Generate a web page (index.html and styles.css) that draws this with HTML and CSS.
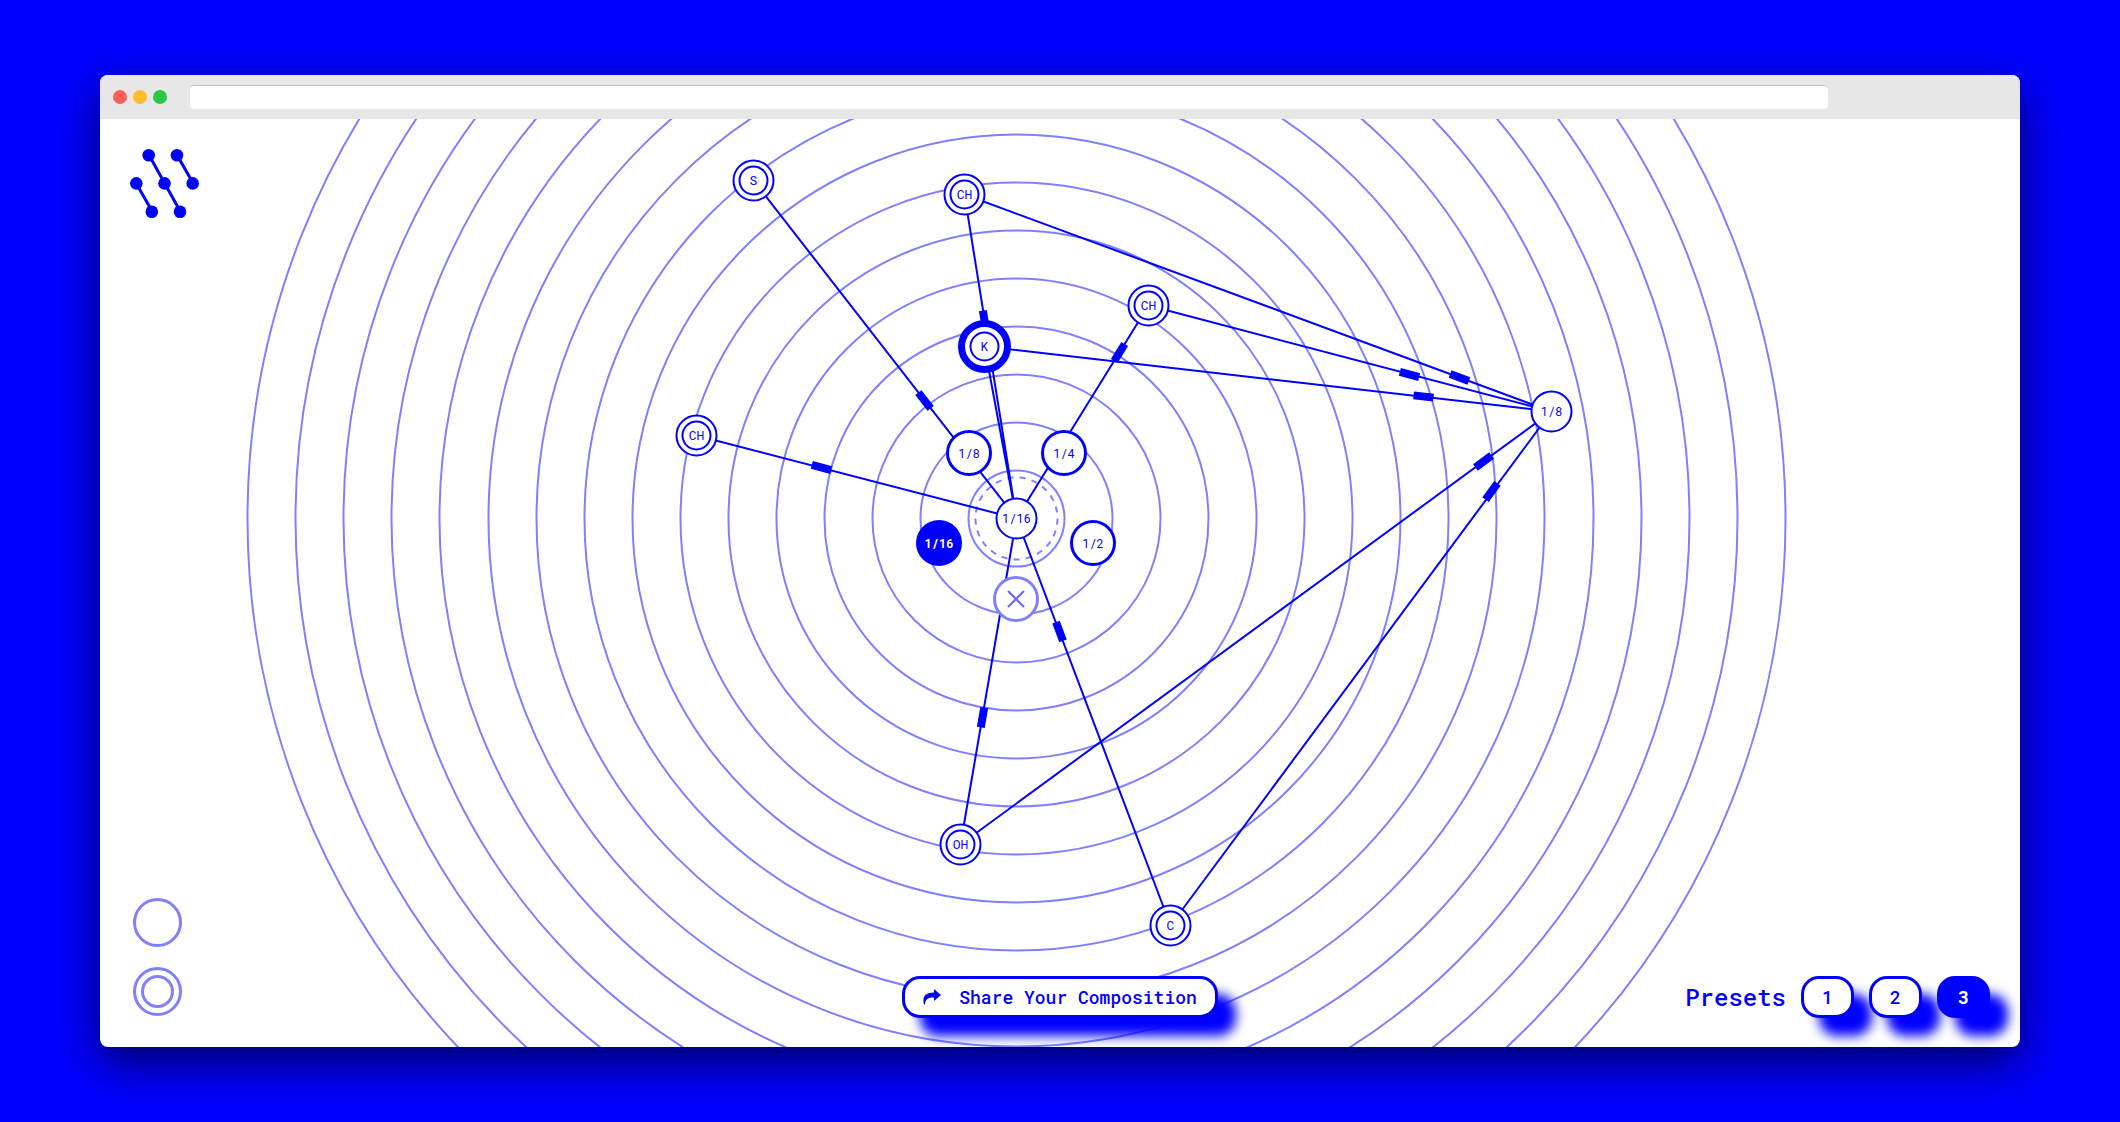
FILE: index.html
```
<!DOCTYPE html>
<html lang="en">
<head>
<meta charset="utf-8">
<meta name="viewport" content="width=device-width, initial-scale=1">
<title>Composition</title>
<link rel="stylesheet" href="styles.css">
</head>
<body>
<div class="window">
  <header class="titlebar">
    <div class="lights">
      <span class="light light-close"></span>
      <span class="light light-min"></span>
      <span class="light light-max"></span>
    </div>
    <input class="address" type="text" aria-label="Address">
  </header>

  <main class="stage">
    <div class="graph">
      <svg class="graph-lines" width="1" height="1" viewBox="-0.5 -0.5 1 1" role="img" aria-label="Sequencer graph">
        <g class="rings">
          <circle r="48"/><circle r="96"/><circle r="144"/><circle r="192"/>
          <circle r="240"/><circle r="288"/><circle r="336"/><circle r="384"/>
          <circle r="432"/><circle r="480"/><circle r="528"/><circle r="577"/>
          <circle r="625"/><circle r="673"/><circle r="721"/><circle r="769"/>
          <circle class="dashed" r="41" pathLength="252"/>
        </g>
        <g class="links">
          <path d="M0 0L-263 -338M0 0L-52 -324M0 0L132 -213M0 0L-32 -172M0 0L-320 -83M0 0L-56 326M0 0L154 407"/>
          <path d="M535 -107L-52 -324M535 -107L132 -213M535 -107L-32 -172M535 -107L-56 326M535 -107L154 407"/>
        </g>
        <g class="pulses">
          <rect x="-10" y="-4" width="20" height="8" transform="translate(-92 -118) rotate(52.1)"/>
          <rect x="-10" y="-4" width="20" height="8" transform="translate(-32 -198) rotate(80.8)"/>
          <rect x="-10" y="-4" width="20" height="8" transform="translate(103 -166) rotate(-58.3)"/>
          <rect x="-10" y="-4" width="20" height="8" transform="translate(-195 -51) rotate(14.5)"/>
          <rect x="-10" y="-4" width="20" height="8" transform="translate(-34 199) rotate(99.8)"/>
          <rect x="-10" y="-4" width="20" height="8" transform="translate(43 113) rotate(69.3)"/>
          <rect x="-10" y="-4" width="20" height="8" transform="translate(443 -141) rotate(20.2)"/>
          <rect x="-10" y="-4" width="20" height="8" transform="translate(393 -144) rotate(14.6)"/>
          <rect x="-10" y="-4" width="20" height="8" transform="translate(407 -122) rotate(6.5)"/>
          <rect x="-10" y="-4" width="20" height="8" transform="translate(467 -57) rotate(-36.2)"/>
          <rect x="-10" y="-4" width="20" height="8" transform="translate(475 -27) rotate(-53.5)"/>
        </g>
        <g class="nodes">
          <g transform="translate(-263 -338)"><circle r="20"/><circle r="14"/><text y="4">S</text></g>
          <g transform="translate(-52 -324)"><circle r="20"/><circle r="14"/><text y="4">CH</text></g>
          <g transform="translate(132 -213)"><circle r="20"/><circle r="14"/><text y="4">CH</text></g>
          <g transform="translate(-32 -172)"><circle class="active" r="23"/><circle r="14"/><text y="4">K</text></g>
          <g transform="translate(-320 -83)"><circle r="20"/><circle r="14"/><text y="4">CH</text></g>
          <g transform="translate(-56 326)"><circle r="20"/><circle r="14"/><text y="4">OH</text></g>
          <g transform="translate(154 407)"><circle r="20"/><circle r="14"/><text y="4">C</text></g>
          <g class="beat" transform="translate(535 -107)"><circle r="20"/><text y="4">1/8</text></g>
          <g class="beat"><circle r="20"/><text y="4">1/16</text></g>
        </g>
      </svg>
      <button class="option option-8" type="button">1/8</button>
      <button class="option option-4" type="button">1/4</button>
      <button class="option option-2" type="button">1/2</button>
      <button class="option option-16" type="button" aria-pressed="true">1/16</button>
      <button class="option option-remove" type="button" aria-label="Remove">
        <svg width="18" height="18" viewBox="0 0 18 18"><path d="M1 1L17 17M17 1L1 17"/></svg>
      </button>
    </div>

    <div class="overlay">
      <a class="logo" href="#" aria-label="Home">
        <svg width="70" height="70" viewBox="0 0 70 70">
          <path d="M19 7L50 63M47 7L63 35M6 35L22 63"/>
          <circle cx="18.7" cy="7.3" r="6.3"/><circle cx="47" cy="7.3" r="6.3"/>
          <circle cx="6.3" cy="35.4" r="6.3"/><circle cx="34.5" cy="35.4" r="6.3"/><circle cx="62.7" cy="35.4" r="6.3"/>
          <circle cx="21.8" cy="63.7" r="6.3"/><circle cx="50" cy="63.7" r="6.3"/>
        </svg>
      </a>
      <footer class="controls">
        <div class="tools">
          <button class="tool" type="button" aria-label="Add beat"></button>
          <button class="tool tool-double" type="button" aria-label="Add instrument"></button>
        </div>
        <button class="pill share" type="button">
          <svg width="18" height="16" viewBox="0 0 18 16"><path d="M11 0L18 6L11 12V8.500C5 8.500 2.500 10 2 15.500H1C-1 8 2 3.500 11 3.500Z"/></svg>
          Share Your Composition
        </button>
        <div class="presets">
          <span class="presets-title">Presets</span>
          <button class="pill preset" type="button">1</button>
          <button class="pill preset" type="button">2</button>
          <button class="pill preset preset-on" type="button" aria-pressed="true">3</button>
        </div>
      </footer>
    </div>
  </main>
</div>
</body>
</html>
```
FILE: styles.css
```
:root {
  --blue: #00f;
  --pale: #8080ff;
  --mono: "Roboto Mono", "DejaVu Sans Mono", monospace;
}

*, *::before { box-sizing: border-box; }

body {
  margin: 0;
  min-height: 100vh;
  padding: 75px 100px;
  display: flex;
  background: var(--blue);
  color: var(--blue);
  font-family: var(--mono);
}

button {
  margin: 0;
  padding: 0;
  color: inherit;
  font-family: inherit;
  font-weight: inherit;
  cursor: pointer;
}

.window {
  flex: 1;
  display: flex;
  flex-direction: column;
  overflow: hidden;
  border-radius: 8px;
  background: #fff;
  box-shadow: 0 16px 46px rgba(0, 0, 0, .62);
}

.titlebar {
  display: flex;
  align-items: center;
  gap: 23px;
  height: 44px;
  padding: 0 192px 0 13px;
  background: #e7e7e7;
}

.lights { display: flex; gap: 6px; }
.light { width: 14px; height: 14px; border-radius: 50%; }
.light-close { background: #ff5f57; }
.light-min { background: #ffbd2e; }
.light-max { background: #28c940; }

.address {
  flex: 1;
  height: 24px;
  border: 0;
  border-top: 1px solid #c2c2c2;
  border-radius: 4px;
  background: #fff;
}

.stage {
  position: relative;
  flex: 1;
  display: flex;
  overflow: hidden;
}

/* zero-size origin: everything in the graph is placed from its hub */
.graph {
  position: absolute;
  left: calc(50% - 44px);
  top: calc(50% - 65px);
  width: 0;
  height: 0;
}

.graph-lines { position: absolute; left: 0; top: 0; overflow: visible; }

.rings circle { fill: none; stroke: var(--pale); stroke-width: 2; }
.rings .dashed { stroke-dasharray: 6 6; }
.links path { fill: none; stroke: var(--blue); stroke-width: 2; }
.pulses rect { fill: var(--blue); }
.nodes circle { fill: #fff; stroke: var(--blue); stroke-width: 2; }
.nodes .active { stroke-width: 7; }
.nodes text { fill: var(--blue); font-size: 13px; text-anchor: middle; }
.nodes .beat text { font-size: 12px; }

.option {
  position: absolute;
  width: 46px;
  height: 46px;
  margin: -23px 0 0 -23px;
  display: grid;
  place-items: center;
  border: 3px solid var(--blue);
  border-radius: 50%;
  background: #fff;
  font-size: 12px;
}
.option-8 { left: -47px; top: -65px; }
.option-4 { left: 48px; top: -65px; }
.option-2 { left: 77px; top: 25px; }
.option-16 { left: -77px; top: 25px; background: var(--blue); color: #fff; font-weight: 700; }
.option-remove { left: 0; top: 81px; border-color: var(--pale); }
.option-remove path { stroke: var(--blue); stroke-opacity: .6; stroke-width: 2; }

.overlay {
  position: relative;
  flex: 1;
  display: flex;
  flex-direction: column;
  justify-content: space-between;
  padding: 29px 30px;
  pointer-events: none;
}
.overlay a, .overlay button { pointer-events: auto; }

.logo { align-self: flex-start; display: block; height: 70px; }
.logo path { stroke: var(--blue); stroke-width: 3; }
.logo circle { fill: var(--blue); }

.controls {
  display: grid;
  grid-template-columns: 1fr auto 1fr;
  align-items: end;
}

.tools {
  display: flex;
  flex-direction: column;
  gap: 20px;
  padding: 0 0 2px 3px;
}

.tool {
  display: grid;
  place-content: center;
  width: 49px;
  height: 49px;
  border: 3px solid var(--pale);
  border-radius: 50%;
  background: #fff;
}
.tool-double::before {
  content: "";
  width: 33px;
  height: 33px;
  border: 3px solid var(--pale);
  border-radius: 50%;
}

.pill {
  height: 42px;
  border: 3px solid var(--blue);
  border-radius: 18px;
  background: #fff;
  box-shadow: 18px 18px 12px var(--blue);
  font-size: 18px;
  font-weight: 500;
}

.share {
  display: flex;
  align-items: center;
  gap: 18px;
  padding: 0 18px;
}
.share path { fill: var(--blue); }

.presets {
  display: flex;
  justify-content: flex-end;
  align-items: center;
  gap: 15px;
}
.presets-title { font-size: 24px; line-height: 32px; font-weight: 500; }
.preset { width: 53px; }
.preset-on { background: var(--blue); color: #fff; font-weight: 700; }
```
